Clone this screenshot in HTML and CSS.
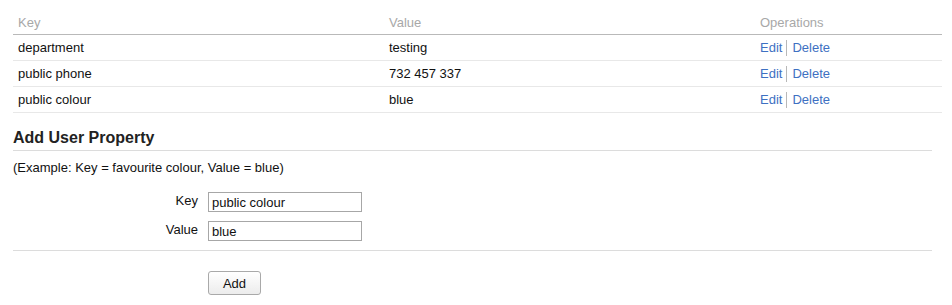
FILE: index.html
```html
<!DOCTYPE html>
<html>
<head>
<meta charset="utf-8">
<link rel="stylesheet" href="styles.css">
</head>
<body>
<div class="page">
  <table class="props">
    <thead>
      <tr><th class="c-key">Key</th><th class="c-val">Value</th><th class="c-ops">Operations</th></tr>
    </thead>
    <tbody>
      <tr><td>department</td><td>testing</td><td class="ops"><a href="#">Edit</a><span class="sep"></span><a href="#">Delete</a></td></tr>
      <tr><td>public phone</td><td>732 457 337</td><td class="ops"><a href="#">Edit</a><span class="sep"></span><a href="#">Delete</a></td></tr>
      <tr><td>public colour</td><td>blue</td><td class="ops"><a href="#">Edit</a><span class="sep"></span><a href="#">Delete</a></td></tr>
    </tbody>
  </table>

  <h2 class="section-title">Add User Property</h2>
  <p class="hint">(Example: Key = favourite colour, Value = blue)</p>

  <form class="add-form">
    <div class="field">
      <label class="field-label">Key</label>
      <input class="field-input" type="text" value="public colour">
    </div>
    <div class="field">
      <label class="field-label">Value</label>
      <input class="field-input" type="text" value="blue">
    </div>
    <div class="form-rule"></div>
    <div class="actions">
      <button type="button" class="btn">Add</button>
    </div>
  </form>
</div>
</body>
</html>
```
FILE: styles.css
```css
html, body {
  margin: 0;
  padding: 0;
  background: #fff;
}
body {
  font-family: "Liberation Sans", Arial, sans-serif;
  font-size: 13px;
  color: #111;
}
.page {
  padding: 11px 0 0 13px;
  width: 929px;
}
.props {
  width: 929px;
  border-collapse: collapse;
  table-layout: fixed;
}
.props th {
  text-align: left;
  font-weight: normal;
  color: #a8a8a8;
  padding: 0 5px;
  height: 23px;
  border-bottom: 1px solid #b9b9b9;
  vertical-align: middle;
}
.c-key { width: 361px; }
.c-val { width: 361px; }
.props td {
  padding: 0 5px;
  height: 25px;
  border-bottom: 1px solid #e8e8e8;
  vertical-align: middle;
}
.ops a {
  color: #3e70c2;
  text-decoration: none;
}
.sep {
  display: inline-block;
  width: 1px;
  height: 16px;
  background: #b8b8b8;
  margin: 0 5px 0 4px;
  vertical-align: -4px;
}
.section-title {
  width: 919px;
  margin: 16px 0 0 0;
  font-size: 16px;
  font-weight: bold;
  color: #222;
  padding-bottom: 4px;
  border-bottom: 1px solid #dcdcdc;
  line-height: 17px;
}
.hint {
  margin: 9px 0 0 0;
  line-height: 16px;
}
.add-form {
  width: 919px;
  margin-top: 16px;
}
.field {
  display: flex;
  align-items: center;
  height: 20px;
  margin-bottom: 9px;
}
.field-label {
  width: 185px;
  text-align: right;
  padding-right: 10px;
  margin-top: -4px;
}
.field-input {
  width: 146px;
  height: 18px;
  box-sizing: content-box;
  border: 1px solid #a7a7a7;
  padding: 0 3px;
  margin: 0;
  font-family: "Liberation Sans", Arial, sans-serif;
  font-size: 13px;
  color: #111;
  outline: none;
}
.form-rule {
  border-top: 1px solid #dcdcdc;
  margin-top: 3px;
}
.actions {
  padding: 20px 0 0 195px;
}
.btn {
  width: 53px;
  height: 24px;
  border: 1px solid #a9a9a9;
  border-radius: 3px;
  background: linear-gradient(#ffffff, #ececec);
  font-family: "Liberation Sans", Arial, sans-serif;
  font-size: 13px;
  color: #111;
  padding: 0;
}
```
